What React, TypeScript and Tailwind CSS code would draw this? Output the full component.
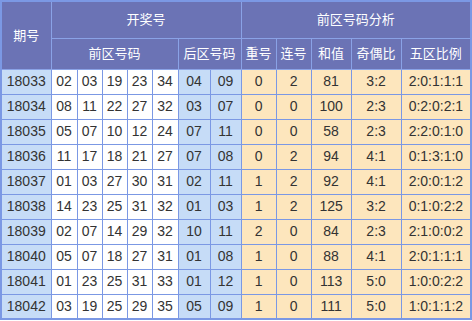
const rows: [string, string[], string[], string[]][] = [
  ["18033", ["02", "03", "19", "23", "34"], ["04", "09"], ["0", "2", "81", "3:2", "2:0:1:1:1"]],
  ["18034", ["08", "11", "22", "27", "32"], ["03", "07"], ["0", "0", "100", "2:3", "0:2:0:2:1"]],
  ["18035", ["05", "07", "10", "12", "24"], ["07", "11"], ["0", "0", "58", "2:3", "2:2:0:1:0"]],
  ["18036", ["11", "17", "18", "21", "27"], ["07", "08"], ["0", "2", "94", "4:1", "0:1:3:1:0"]],
  ["18037", ["01", "03", "27", "30", "31"], ["02", "11"], ["1", "2", "92", "4:1", "2:0:0:1:2"]],
  ["18038", ["14", "23", "25", "31", "32"], ["01", "03"], ["1", "2", "125", "3:2", "0:1:0:2:2"]],
  ["18039", ["02", "07", "14", "29", "32"], ["10", "11"], ["2", "0", "84", "2:3", "2:1:0:0:2"]],
  ["18040", ["05", "07", "18", "27", "31"], ["01", "08"], ["1", "0", "88", "4:1", "2:0:1:1:1"]],
  ["18041", ["01", "23", "25", "31", "33"], ["01", "12"], ["1", "0", "113", "5:0", "1:0:0:2:2"]],
  ["18042", ["03", "19", "25", "29", "35"], ["05", "09"], ["1", "0", "111", "5:0", "1:0:1:1:2"]],
];

const widths = [50, 26, 25, 25, 25, 26, 32, 31, 35, 35, 40, 50, 70];

const th = "border border-[#8aa2e6] bg-[#6b73b5] p-0 text-center text-[13px] font-normal text-white";
const td = "border border-[#7b98e4] p-0 text-center text-[14px] text-[#333]";

export default function App() {
  return (
    <div className="h-[321px] w-[472px] bg-white font-['Liberation_Sans','Noto_Sans_CJK_SC',sans-serif]">
      <table className="w-[472px] table-fixed border-collapse border-2 border-[#7b98e4]">
        <colgroup>
          {widths.map((w, i) => (
            <col key={i} style={{ width: w }} />
          ))}
        </colgroup>
        <thead>
          <tr className="h-[37px]">
            <th rowSpan={2} className={th}>期号</th>
            <th colSpan={7} className={th}>开奖号</th>
            <th colSpan={5} className={th}>前区号码分析</th>
          </tr>
          <tr className="h-[31px]">
            <th colSpan={5} className={th}>前区号码</th>
            <th colSpan={2} className={th}>后区号码</th>
            <th className={th}>重号</th>
            <th className={th}>连号</th>
            <th className={th}>和值</th>
            <th className={th}>奇偶比</th>
            <th className={th}>五区比例</th>
          </tr>
        </thead>
        <tbody>
          {rows.map(([issue, front, back, stats]) => (
            <tr key={issue} className="h-[25px]">
              <td className={`${td} bg-[#c6dcf7]`}>{issue}</td>
              {front.map((n, i) => (
                <td key={"f" + i} className={`${td} bg-white`}>{n}</td>
              ))}
              {back.map((n, i) => (
                <td key={"b" + i} className={`${td} bg-[#c6dcf7]`}>{n}</td>
              ))}
              {stats.map((s, i) => (
                <td key={"s" + i} className={`${td} bg-[#fde6bd]`}>{s}</td>
              ))}
            </tr>
          ))}
        </tbody>
      </table>
    </div>
  );
}
